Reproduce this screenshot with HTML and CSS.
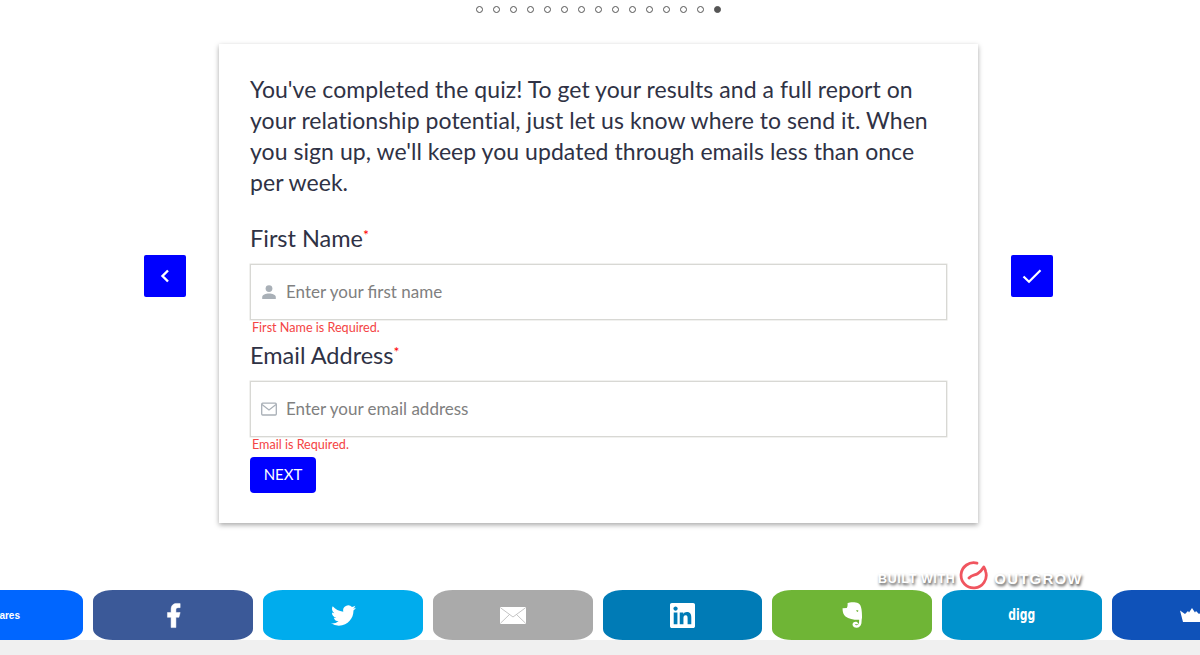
FILE: index.html
```html
<!DOCTYPE html>
<html lang="en">
<head>
    <meta charset="UTF-8">
    <title>Quiz</title>
    <link rel="stylesheet" href="styles.css">
</head>
<body>
    <!-- progress dots -->
    <div class="dots">
        <span class="dot"></span><span class="dot"></span><span class="dot"></span><span class="dot"></span><span class="dot"></span>
        <span class="dot"></span><span class="dot"></span><span class="dot"></span><span class="dot"></span><span class="dot"></span>
        <span class="dot"></span><span class="dot"></span><span class="dot"></span><span class="dot"></span><span class="dot active"></span>
    </div>

    <div class="stage">
        <button class="nav-btn" type="button" aria-label="Back">
            <svg width="14" height="16" viewBox="0 0 14 16"><path d="M10 2.500 4.500 8 10 13.500" fill="none" stroke="#fff" stroke-width="2.400"/></svg>
        </button>

        <form class="card">
            <p class="intro">You've completed the quiz! To get your results and a full report on your relationship potential, just let us know where to send it. When you sign up, we'll keep you updated through emails less than once per week.</p>

            <div class="field">
                <label class="field-label">First Name<span class="req">*</span></label>
                <div class="input-box">
                    <svg class="input-icon" width="16" height="16" viewBox="0 0 16 16"><circle cx="8" cy="4.600" r="3.400" fill="#a9b0b7"/><path d="M1.200 15v-2c0-2.400 3.400-3.600 6.800-3.600s6.800 1.200 6.800 3.600v2z" fill="#a9b0b7"/></svg>
                    <input class="text-input" type="text" placeholder="Enter your first name">
                </div>
                <div class="error">First Name is Required.</div>
            </div>

            <div class="field">
                <label class="field-label">Email Address<span class="req">*</span></label>
                <div class="input-box">
                    <svg class="input-icon" width="16" height="16" viewBox="0 0 16 16"><rect x=".7" y="2.200" width="14.600" height="11.800" rx="1" fill="none" stroke="#a9b0b7" stroke-width="1.300"/><path d="M1 3.500 8 9l7-5.500" fill="none" stroke="#a9b0b7" stroke-width="1.200"/></svg>
                    <input class="text-input" type="text" placeholder="Enter your email address">
                </div>
                <div class="error">Email is Required.</div>
            </div>

            <button class="next-btn" type="button">NEXT</button>
        </form>

        <button class="nav-btn" type="button" aria-label="Finish">
            <svg width="20" height="16" viewBox="0 0 20 16"><path d="M1.500 8.500 7 13.800 18.500 2.200" fill="none" stroke="#fff" stroke-width="2.200"/></svg>
        </button>
    </div>

    <!-- built with badge -->
    <div class="built">
        <span class="built-text">BUILT WITH</span>
        <svg class="built-logo" width="29" height="29" viewBox="0 0 29 29"><path d="M18 2.200A12.600 12.600 0 1 0 26.800 11c-.3-1.700-1-3.300-2-5-1.800 3-3.800 5.300-6.300 6.800-2.800 1.600-5.300.8-8.500 4.200" fill="none" stroke="#f0555f" stroke-width="2.800" stroke-linecap="round" stroke-linejoin="round"/></svg>
        <span class="built-text wide">OUTGROW</span>
    </div>

    <!-- share buttons -->
    <div class="share-bar">
        <a class="share shares-count"><span class="count-text">Shares</span></a>
        <a class="share fb">
            <svg width="29" height="29" viewBox="0 0 24 24"><path fill="#fff" stroke="#fff" stroke-width=".4" d="M14 13.500h2.500l1-4H14v-2c0-1.030 0-2 2-2h1.500V2.140c-.326-.043-1.557-.14-2.857-.14C11.928 2 10 3.657 10 6.700v2.800H7v4h3V22h4v-8.500z"/></svg>
        </a>
        <a class="share tw">
            <svg width="25" height="25" viewBox="0 0 24 24"><path fill="#fff" d="M23.953 4.570a10 10 0 01-2.825.775 4.958 4.958 0 002.163-2.723c-.951.555-2.005.959-3.127 1.184a4.920 4.920 0 00-8.384 4.482C7.690 8.095 4.067 6.130 1.640 3.162a4.822 4.822 0 00-.666 2.475c0 1.710.870 3.213 2.188 4.096a4.904 4.904 0 01-2.228-.616v.060a4.923 4.923 0 003.946 4.827 4.996 4.996 0 01-2.212.085 4.936 4.936 0 004.604 3.417 9.867 9.867 0 01-6.102 2.105c-.390 0-.779-.023-1.170-.067a13.995 13.995 0 007.557 2.209c9.053 0 13.998-7.496 13.998-13.985 0-.210 0-.420-.015-.630A9.935 9.935 0 0024 4.590z"/></svg>
        </a>
        <a class="share mail">
            <svg width="26" height="17" viewBox="0 0 26 17"><rect width="26" height="17" rx="1" fill="#fff"/><path d="M.5.800 13 10 25.500.800M.5 16.200 9.500 7.500M25.500 16.200 16.500 7.500" fill="none" stroke="#b5b5b5" stroke-width=".8"/></svg>
        </a>
        <a class="share li">
            <svg width="25" height="25" viewBox="0 0 24 24"><path fill="#fff" d="M20.447 20.452h-3.554v-5.569c0-1.328-.027-3.037-1.852-3.037-1.853 0-2.136 1.445-2.136 2.939v5.667H9.351V9h3.414v1.561h.046c.477-.9 1.637-1.850 3.370-1.850 3.601 0 4.267 2.370 4.267 5.455v6.286zM5.337 7.433c-1.144 0-2.063-.926-2.063-2.065 0-1.138.920-2.063 2.063-2.063 1.140 0 2.064.925 2.064 2.063 0 1.139-.925 2.065-2.064 2.065zm1.782 13.019H3.555V9h3.564v11.452zM22.225 0H1.771C.792 0 0 .774 0 1.729v20.542C0 23.227.792 24 1.771 24h20.451C23.200 24 24 23.227 24 22.271V1.729C24 .774 23.200 0 22.222 0h.003z"/></svg>
        </a>
        <a class="share en">
            <svg width="21" height="26" viewBox="0 0 21 26"><path fill="#fff" d="M5.500 1.200C8.500-.2 13.500-.1 16.300 1.300c2 1 2.700 3 3.200 6 .4 2.700.6 6 .5 9l-2 1.500c-5 .3-11-.5-14.500-3.300C1.200 12.800.4 9 .6 6.200l4.200-.2c.8-1.300 1-3 .7-4.800z"/><path d="M18 13c1.200 6 .6 11.400-3.500 11.500-2.500.1-3.500-2-2.100-3.200 1-.8 2.600-.3 2.600.9" fill="none" stroke="#fff" stroke-width="2.500"/><path fill="#6fb536" d="M14 8.300h2.300l-.3 1.800c-.9-.3-1.600-.9-2-1.800z"/></svg>
        </a>
        <a class="share dg"><span class="digg">digg</span></a>
        <a class="share crown">
            <svg width="24" height="14" viewBox="0 0 24 14"><path fill="#fff" d="M0 2.500 5 6 8 3l1 1.500L12 0l3 4.500L16 3l3 3 5-3.500L21 14H3z"/></svg>
        </a>
    </div>
    <div class="footer"></div>
</body>
</html>
```

FILE: styles.css
```css
* {
    margin: 0;
    padding: 0;
    box-sizing: border-box;
}

body {
    font-family: 'Lato', 'Liberation Sans', sans-serif;
    background: #fff;
    overflow: hidden;
    height: 655px;
}

/* progress dots */
.dots {
    display: flex;
    justify-content: center;
    gap: 10px;
    padding: 6px 4px 0 0;
    height: 44px;
}

.dot {
    width: 7px;
    height: 7px;
    border: 1px solid #555;
    border-radius: 50%;
}

.dot.active {
    background: #555;
}

/* card and side buttons */
.stage {
    display: flex;
    justify-content: center;
    align-items: center;
    gap: 33px;
    padding-right: 3px;
}

.nav-btn {
    width: 42px;
    height: 42px;
    margin-bottom: 15px;
    border: none;
    border-radius: 2px;
    background: #0000ff;
    display: flex;
    align-items: center;
    justify-content: center;
}

.card {
    width: 759px;
    height: 479px;
    padding: 30px 31px;
    background: #fff;
    box-shadow: 0 2px 5px rgba(0,0,0,0.35);
}

.intro {
    font-size: 23px;
    line-height: 31px;
    letter-spacing: 0.05px;
    color: #2f3245;
    margin-bottom: 25px;
}

.field {
    margin-bottom: 4px;
}

.field-label {
    display: block;
    font-size: 23.500px;
    line-height: 31px;
    color: #2f3245;
    margin-bottom: 10px;
}

.req {
    color: #f00;
    font-size: 14px;
    vertical-align: 7px;
    line-height: 0;
}

.input-box {
    display: flex;
    align-items: center;
    height: 56px;
    padding-left: 10px;
    border: 1px solid #d8d8d4;
    box-shadow: 0 0 0 .5px #e2e2de;
}

.input-icon {
    flex: none;
    margin-right: 9px;
}

.text-input {
    flex: 1;
    border: none;
    outline: none;
    font-family: inherit;
    font-size: 17px;
    padding-bottom: 2px;
    color: #333;
}

.text-input::placeholder {
    color: #808080;
    opacity: 1;
}

.error {
    height: 16px;
    padding: 1px 0 0 2px;
    font-size: 12.600px;
    line-height: 14px;
    color: #f44444;
}

.next-btn {
    width: 66px;
    height: 36px;
    padding-bottom: 2px;
    border: none;
    border-radius: 4px;
    background: #0000ff;
    color: #fff;
    font-family: inherit;
    font-size: 15px;
}

/* built with badge */
.built {
    display: flex;
    align-items: center;
    height: 29px;
    margin-top: 38px;
    padding-left: 878px;
}

.built-text {
    font-family: 'Liberation Sans', sans-serif;
    font-weight: 700;
    font-size: 12.500px;
    color: #fff;
    letter-spacing: .6px;
    text-shadow: 1px 2px 3px #444;
    margin-top: 6px;
}

.built-text.wide {
    font-size: 15px;
    letter-spacing: 1.200px;
}

.built-logo {
    margin: 0 6px 0 4px;
}

/* share buttons */
.share-bar {
    display: flex;
    gap: 10px;
    height: 50px;
    margin-left: -77px;
}

.share {
    flex: 0 0 160px;
    height: 50px;
    border-radius: 20px / 11px;
    display: flex;
    align-items: center;
    justify-content: center;
    color: #fff;
}

.shares-count { background: #0066ff; justify-content: flex-end; padding-right: 63px; }
.fb { background: #3b5998; }
.tw { background: #00aced; }
.mail { background: #aaaaaa; }
.li { background: #007bb6; flex-basis: 159px; }
.en { background: #6fb536; }
.dg { background: #0092cc; }
.crown { background: #0f52b9; }

.count-text {
    font-family: 'Liberation Sans', sans-serif;
    font-size: 10px;
    font-weight: 700;
    white-space: nowrap;
}

.digg {
    font-family: 'DejaVu Sans', sans-serif;
    font-size: 15px;
    font-weight: 700;
    transform: scale(.72, 1.1);
}

.footer {
    height: 15px;
    background: #f0f0f0;
}
```
